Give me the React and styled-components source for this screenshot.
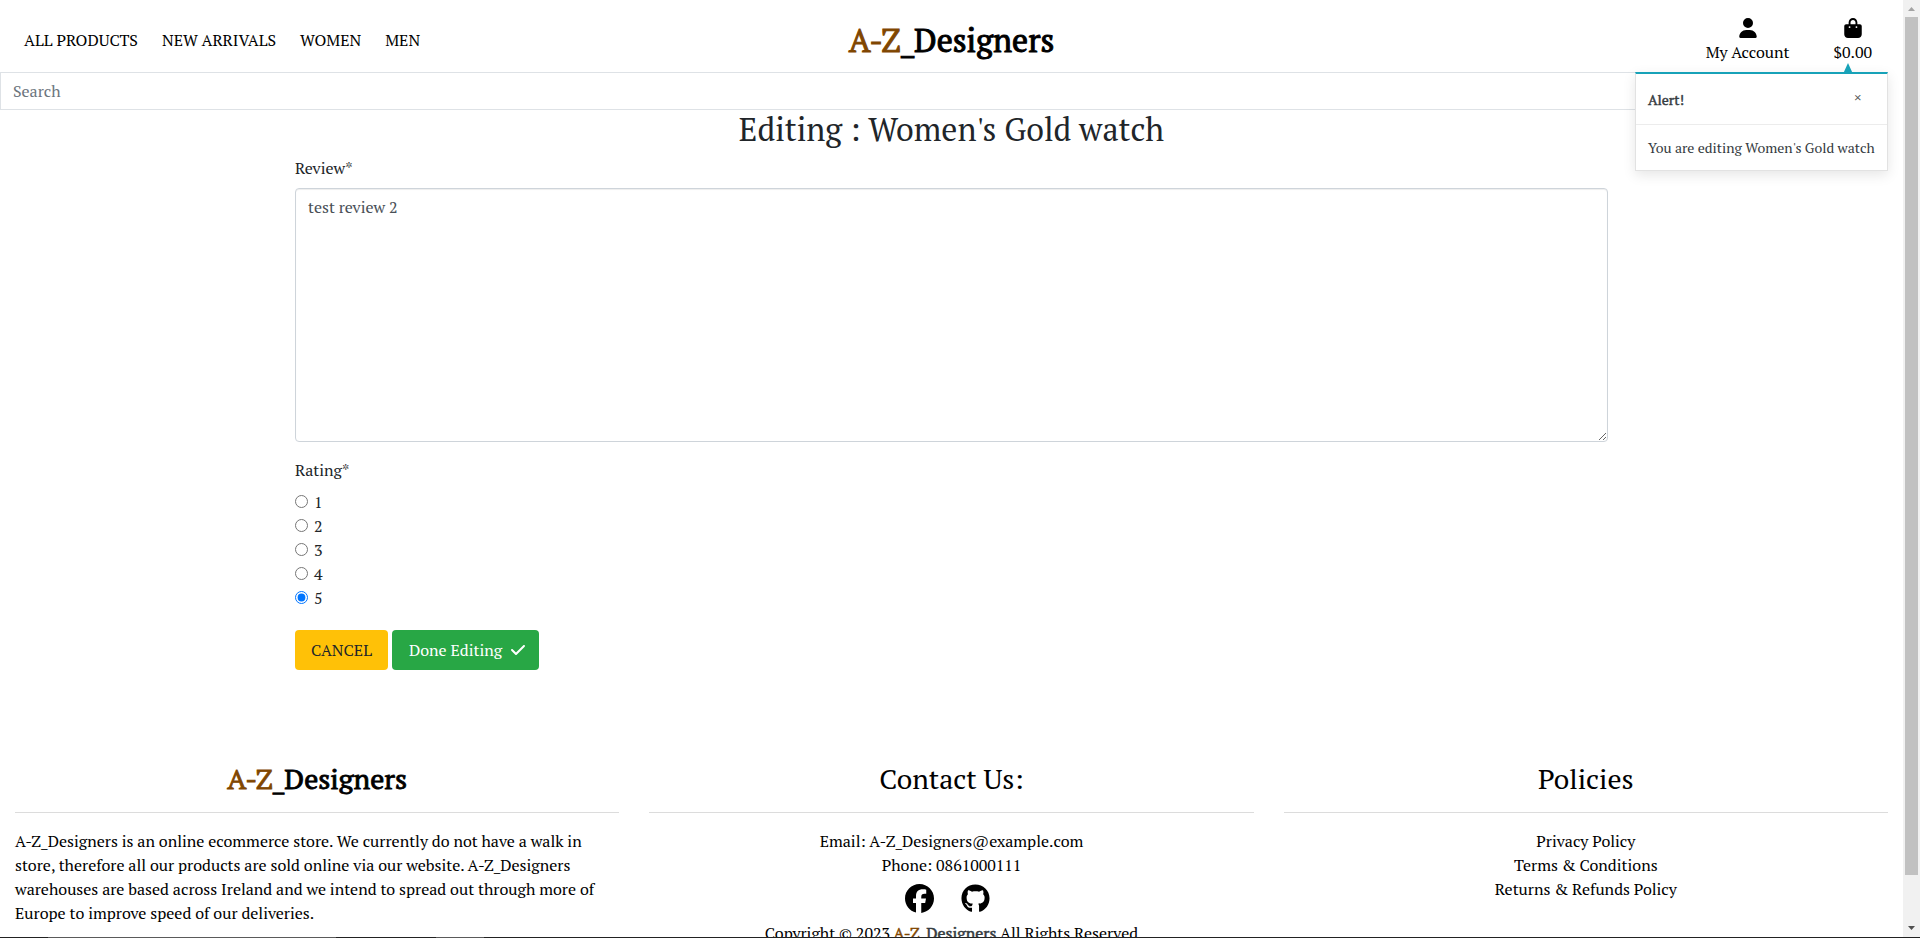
import React, { useState } from "react";
import styled, { createGlobalStyle, css } from "styled-components";
import { FaUser, FaBagShopping, FaCheck, FaFacebook, FaGithub } from "react-icons/fa6";

const GlobalStyle = createGlobalStyle`
  *, *::before, *::after { box-sizing: border-box; }
  body {
    margin: 0;
    background: #fff;
    color: #212529;
    font-family: "PT Serif", "Liberation Serif", serif;
    font-size: 16px;
    line-height: 24px;
  }
  input, textarea, button { font: inherit; }
  a { color: inherit; text-decoration: none; }
`;

/* Bold drawn by thickening the regular cut, so widths stay those of the regular. */
const thickened = css`
  font-weight: 400;
  -webkit-text-stroke: 0.03em currentColor;
`;

const Frame = styled.div`
  height: 100vh;
  display: flex;
  flex-direction: column;
  overflow: hidden;
`;

const Viewport = styled.div`
  flex: 1;
  min-height: 0;
  display: flex;
`;

const Page = styled.div`
  flex: 1;
  min-width: 0;
  overflow: hidden;
`;

const BottomEdge = styled.div`
  flex: none;
  height: 1px;
  background: linear-gradient(
    90deg,
    #222 48px, #5a5a5a 48px 336px, #222 336px 436px, #5a5a5a 436px 484px, #222 484px
  );
`;

const ScrollTrack = styled.div`
  flex: none;
  width: 17px;
  padding: 0 2px;
  display: flex;
  flex-direction: column;
  align-items: center;
  background: #f1f1f1;
`;

const ScrollArrow = styled.svg`
  flex: none;
  width: 17px;
  height: 17px;
  fill: ${(p) => p.$color};
`;

const ScrollRun = styled.div`
  flex: 1;
  align-self: stretch;
`;

const ScrollThumb = styled.div`
  height: 95%;
  background: #c1c1c1;
`;

const Header = styled.header`
  position: relative;
  height: 72px;
  display: grid;
  grid-template-columns: 1fr auto 1fr;
  align-items: center;
  color: #000;
`;

const Nav = styled.nav`
  display: flex;
  gap: 24px;
  padding: 8px 24px 0;
`;

const Brand = styled.a`
  padding-top: 8px;
  font-size: 32px;
  line-height: 40px;
  ${thickened}
`;

const Accent = styled.span`
  color: #804600;
`;

const Tools = styled.div`
  display: flex;
  justify-content: flex-end;
  align-self: start;
  gap: 44px;
  padding: 18px 31px 0 0;
`;

const Tool = styled.a`
  display: flex;
  flex-direction: column;
  align-items: center;
  gap: 2px;
`;

const Toast = styled.div`
  position: absolute;
  z-index: 2;
  top: 72px;
  right: 15px;
  width: 253px;
  border: 1px solid #e2e2e2;
  border-top: 2px solid #17a2b8;
  background: #fff;
  box-shadow: 0 4px 12px rgba(0, 0, 0, 0.1);
  color: #343a40;
  font-size: 14px;
`;

const ToastArrow = styled.span`
  position: absolute;
  right: 34px;
  bottom: 100%;
  border: 5px solid transparent;
  border-top: 0;
  border-bottom: 11px solid #17a2b8;
`;

const ToastHead = styled.div`
  display: flex;
  align-items: center;
  justify-content: space-between;
  height: 51px;
  padding: 2px 25px 0 12px;
  border-bottom: 1px solid #ececec;
`;

const ToastTitle = styled.strong`
  ${thickened}
`;

const CloseButton = styled.button`
  padding: 0 0 6px;
  border: 0;
  background: none;
  color: #555;
  font-size: 16px;
  line-height: 20px;
`;

const ToastBody = styled.p`
  margin: 0;
  padding: 11px 0 10px 12px;
  white-space: nowrap;
`;

const SearchBar = styled.form`
  padding-right: 16px;
`;

const SearchInput = styled.input`
  display: block;
  width: 100%;
  height: 38px;
  padding: 6px 12px;
  border: 1px solid #dee2e6;
  background: #fff;
  color: #495057;
  &::placeholder { color: #6c757d; opacity: 1; }
`;

const Main = styled.main`
  padding-bottom: 92px;
`;

const Title = styled.h1`
  margin: 0 0 8px;
  font-size: 32px;
  line-height: 38px;
  font-weight: 400;
  text-align: center;
`;

const Form = styled.form`
  width: 69%;
  margin: 0 auto;
`;

const Label = styled.label`
  display: block;
  margin-bottom: 8px;
`;

const TextArea = styled.textarea`
  display: block;
  width: 100%;
  height: 254px;
  margin-bottom: 16px;
  padding: 6px 12px;
  border: 1px solid #ced4da;
  border-radius: 4px;
  background: #fff;
  box-shadow: inset 0 1px 1px rgba(0, 0, 0, 0.07);
  color: #495057;
  line-height: 24px;
  resize: vertical;
`;

const Ratings = styled.fieldset`
  margin: 0 0 20px;
  padding: 0;
  border: 0;
`;

const Legend = styled.legend`
  margin-bottom: 8px;
  padding: 0;
`;

const Option = styled.label`
  display: flex;
  align-items: center;
  gap: 6px;
  height: 24px;
`;

const Radio = styled.input`
  width: 13px;
  height: 13px;
  margin: 0 0 2px;
  accent-color: #0075ff;
`;

const Actions = styled.div`
  display: flex;
  gap: 4px;
`;

const Button = styled.button`
  display: flex;
  align-items: center;
  gap: 8px;
  height: 40px;
  padding: 0 ${(p) => (p.$tone === "success" ? 13 : 16)}px 0 ${(p) => (p.$tone === "success" ? 17 : 16)}px;
  border: 0;
  border-radius: 4px;
  background: ${(p) => (p.$tone === "success" ? "#28a745" : "#ffc107")};
  color: ${(p) => (p.$tone === "success" ? "#fff" : "#212529")};
`;

const Footer = styled.footer`
  display: grid;
  grid-template-columns: repeat(3, 1fr);
  color: #000;
`;

const Column = styled.section`
  min-width: 0;
  padding: 0 15px;
  text-align: center;
`;

const ColumnTitle = styled.h2`
  margin: 0;
  font-size: 28px;
  line-height: 34px;
  font-weight: 400;
  ${(p) => p.$bold && thickened}
`;

const Rule = styled.hr`
  height: 1px;
  margin: 16px 0;
  border: 0;
  background: #dcdcdc;
`;

const About = styled.p`
  margin: 0;
  text-align: left;
`;

const Line = styled.div`
  white-space: nowrap;
`;

const Social = styled.div`
  display: flex;
  justify-content: center;
  gap: 27px;
  height: 44px;
  padding: 7px 8px 0 0;
  font-size: 29px;
`;

const Mark = styled.strong`
  color: #343a40;
  ${thickened}
`;

export default function App() {
  const [review, setReview] = useState("test review 2");
  const [rating, setRating] = useState(5);
  const [toast, setToast] = useState(true);

  return (
    <Frame>
      <GlobalStyle />
      <Viewport>
        <Page>
          <Header>
            <Nav>
              <a href="#all">ALL PRODUCTS</a>
              <a href="#new">NEW ARRIVALS</a>
              <a href="#women">WOMEN</a>
              <a href="#men">MEN</a>
            </Nav>
            <Brand href="#home">
              <Accent>A-Z</Accent>_Designers
            </Brand>
            <Tools>
              <Tool href="#account">
                <FaUser size={20} />
                My Account
              </Tool>
              <Tool href="#bag">
                <FaBagShopping size={20} />
                $0.00
              </Tool>
            </Tools>
            {toast && (
              <Toast role="status">
                <ToastArrow />
                <ToastHead>
                  <ToastTitle>Alert!</ToastTitle>
                  <CloseButton type="button" aria-label="Close" onClick={() => setToast(false)}>
                    ×
                  </CloseButton>
                </ToastHead>
                <ToastBody>You are editing Women's Gold watch</ToastBody>
              </Toast>
            )}
          </Header>
          <SearchBar role="search" onSubmit={(e) => e.preventDefault()}>
            <SearchInput type="text" placeholder="Search" aria-label="Search" />
          </SearchBar>
          <Main>
            <Title>Editing : Women's Gold watch</Title>
            <Form onSubmit={(e) => e.preventDefault()}>
              <Label htmlFor="review">Review*</Label>
              <TextArea id="review" value={review} onChange={(e) => setReview(e.target.value)} />
              <Ratings>
                <Legend>Rating*</Legend>
                {[1, 2, 3, 4, 5].map((n) => (
                  <Option key={n}>
                    <Radio type="radio" name="rating" checked={rating === n} onChange={() => setRating(n)} />
                    {n}
                  </Option>
                ))}
              </Ratings>
              <Actions>
                <Button type="button" $tone="warning">CANCEL</Button>
                <Button type="submit" $tone="success">
                  Done Editing <FaCheck size={16} />
                </Button>
              </Actions>
            </Form>
          </Main>
          <Footer>
            <Column>
              <ColumnTitle $bold><Accent>A-Z</Accent>_Designers</ColumnTitle>
              <Rule />
              <About>
                A-Z_Designers is an online ecommerce store. We currently do not have a walk in
                store, therefore all our products are sold online via our website. A-Z_Designers
                warehouses are based across Ireland and we intend to spread out through more of
                Europe to improve speed of our deliveries.
              </About>
            </Column>
            <Column>
              <ColumnTitle>Contact Us:</ColumnTitle>
              <Rule />
              <Line>Email: A-Z_Designers@example.com</Line>
              <Line>Phone: 0861000111</Line>
              <Social>
                <a href="#facebook" aria-label="Facebook"><FaFacebook /></a>
                <a href="#github" aria-label="GitHub"><FaGithub /></a>
              </Social>
              <Line>
                Copyright © 2023 <Mark><Accent>A-Z</Accent>_Designers</Mark> All Rights Reserved
              </Line>
            </Column>
            <Column>
              <ColumnTitle>Policies</ColumnTitle>
              <Rule />
              <Line><a href="#privacy">Privacy Policy</a></Line>
              <Line><a href="#terms">Terms &amp; Conditions</a></Line>
              <Line><a href="#returns">Returns &amp; Refunds Policy</a></Line>
            </Column>
          </Footer>
        </Page>
        <ScrollTrack aria-hidden="true">
          <ScrollArrow viewBox="0 0 17 17" $color="#a3a3a3"><path d="M5 11h7L8.500 7z" /></ScrollArrow>
          <ScrollRun><ScrollThumb /></ScrollRun>
          <ScrollArrow viewBox="0 0 17 17" $color="#505050"><path d="M5 6h7L8.500 10z" /></ScrollArrow>
        </ScrollTrack>
      </Viewport>
      <BottomEdge />
    </Frame>
  );
}
